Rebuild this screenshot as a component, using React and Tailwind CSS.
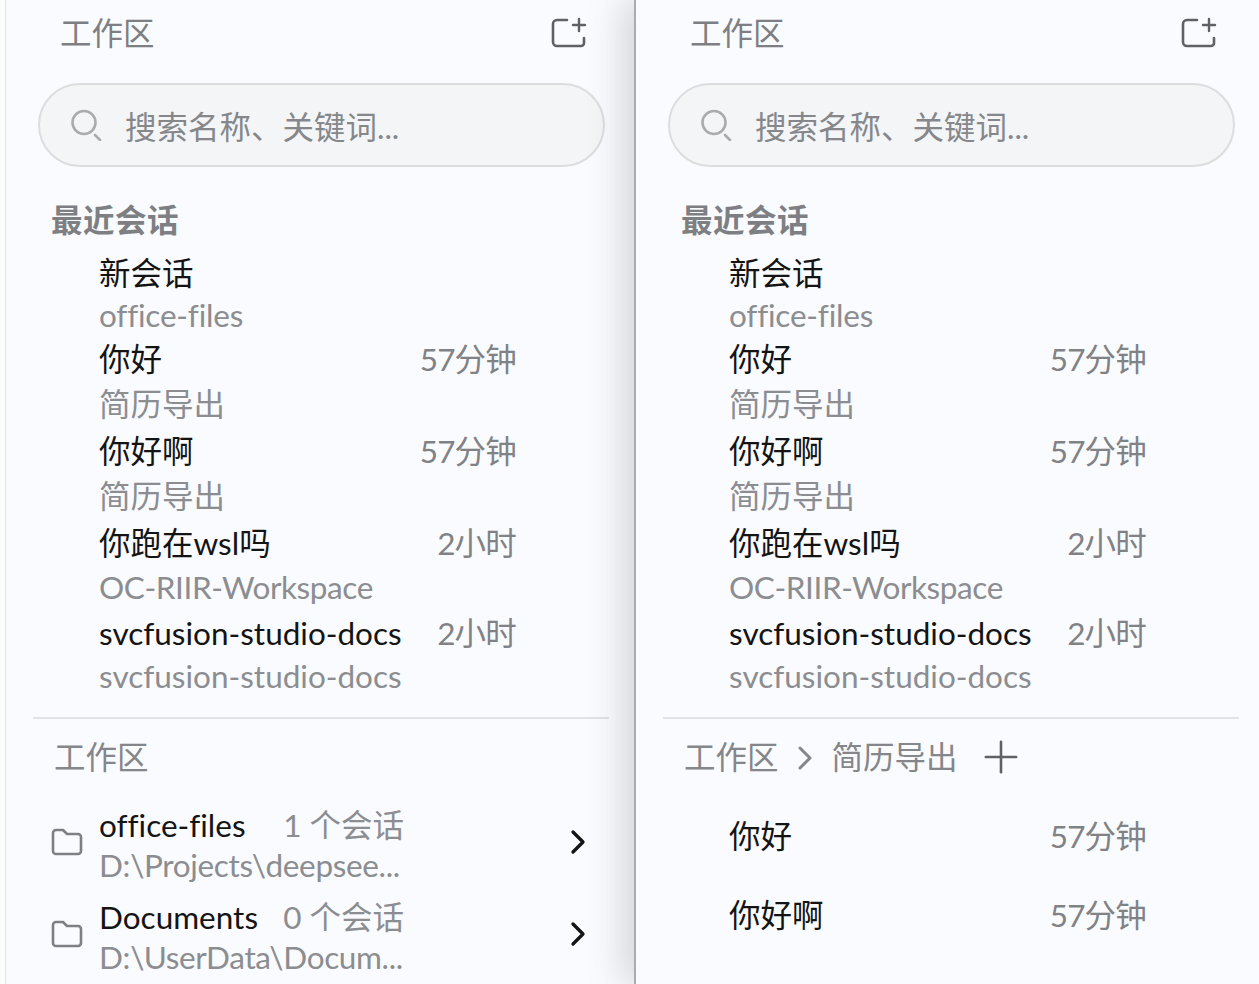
import { ChevronRight, Plus } from "lucide-react";

const sessions = [
  { title: "新会话", sub: "office-files", time: "", subClass: "leading-[40px] mb-[2px] tracking-[-0.2px]" },
  { title: "你好", sub: "简历导出", time: "57分钟", subClass: "leading-[46px] mb-[2px]" },
  { title: "你好啊", sub: "简历导出", time: "57分钟", subClass: "leading-[47px] mb-[1px]" },
  { title: "你跑在wsl吗", sub: "OC-RIIR-Workspace", time: "2小时", subClass: "leading-[44px] mb-[2px] tracking-[-0.4px]" },
  { title: "svcfusion-studio-docs", sub: "svcfusion-studio-docs", time: "2小时", subClass: "leading-[42px] mb-[2px]" },
];

const workspaces = [
  { name: "office-files", count: "1 个会话", path: "D:\\Projects\\deepsee..." },
  { name: "Documents", count: "0 个会话", path: "D:\\UserData\\Docum..." },
];

function NewChatIcon() {
  return (
    <svg width="36" height="32" viewBox="0 0 36 32" fill="none" stroke="#5f6164" strokeWidth="2.6" strokeLinecap="round" strokeLinejoin="round">
      <path d="M16 3H6a4 4 0 0 0-4 4v18a4 4 0 0 0 4 4h24a3 3 0 0 0 3-3v-5" />
      <path d="M28 2v12M22 8h12" strokeWidth="2.4" />
    </svg>
  );
}

function SearchIcon() {
  return (
    <svg width="32" height="32" viewBox="0 0 32 32" fill="none" stroke="#a9abae" strokeWidth="2.6" strokeLinecap="round">
      <circle cx="14" cy="13.5" r="11.5" />
      <path d="M25 26l5 5" />
    </svg>
  );
}

function FolderIcon() {
  return (
    <svg width="32" height="28" viewBox="0 0 32 28" fill="none" stroke="#7d7f83" strokeWidth="2.6" strokeLinejoin="round">
      <path d="M2 5a3 3 0 0 1 3-3h7l4 4h11a3 3 0 0 1 3 3v14a3 3 0 0 1-3 3H5a3 3 0 0 1-3-3z" />
    </svg>
  );
}

function SessionRow({ title, sub, time, subClass }) {
  return (
    <div className="w-[417px] ml-[66px]">
      <div className="flex justify-between leading-[44px] text-[#141414]">
        <span className="whitespace-nowrap">{title}</span>
        <span className="text-[#808285] tracking-[-0.8px]">{time}</span>
      </div>
      <div className={`text-[#8b8d91] whitespace-nowrap ${subClass}`}>{sub}</div>
    </div>
  );
}

function Panel({ children, className }) {
  return (
    <div className={`h-[984px] overflow-hidden bg-[#fafbfe] shrink-0 ${className}`}>
      <div className="w-[576px] ml-[27px]">
        <div className="h-[66px] flex items-center justify-between pl-[27px] pr-[22px]">
          <span className="text-[#7d7f83] pt-[2px]">工作区</span>
          <NewChatIcon />
        </div>
        <div className="mt-[17px] ml-[5px] w-[567px] h-[84px] rounded-full border-2 border-[#dcdddf] bg-[#f4f5f7] flex items-center pl-[30px]">
          <SearchIcon />
          <span className="ml-[23px] pt-[5px] text-[#85878b]">搜索名称、关键词...</span>
        </div>
        <div className="mt-[31px] h-[45px] pl-[18px] leading-[45px] font-bold tracking-[0.5px] text-[#7d7f83]">最近会话</div>
        <div className="mt-[8px]">
          {sessions.map((s) => (
            <SessionRow key={s.title} {...s} />
          ))}
        </div>
        <div className="mt-[20px] h-[2px] bg-[#e2e3e5]" />
        {children}
      </div>
    </div>
  );
}

export default function App() {
  return (
    <div className="flex w-[1259px] h-[984px] overflow-hidden bg-[#fdfdfd] text-[31.5px] [font-variant-ligatures:none] font-['Lato','Noto_Sans_CJK_SC',sans-serif]">
      <div className="w-[6px] shrink-0 border-r border-[#e3e4e6]" />
      <Panel className="w-[628px]">
        <div className="h-[78px] flex items-center pl-[21px] text-[#84868a]">工作区</div>
        <div className="mt-[8px] flex flex-col gap-[12px]">
          {workspaces.map((w) => (
            <div key={w.name} className="flex items-center">
              <div className="w-[66px] pl-[18px] -mt-[6px]">
                <FolderIcon />
              </div>
              <div className="w-[305px]">
                <div className="flex justify-between leading-[40px] text-[#141414]">
                  <span>{w.name}</span>
                  <span className="text-[#8b8d91]">{w.count}</span>
                </div>
                <div className="leading-[40px] text-[#8b8d91] whitespace-nowrap tracking-[-0.35px]">{w.path}</div>
              </div>
              <ChevronRight className="ml-[154px] -mt-[6px] text-[#141414]" size={40} strokeWidth={2} />
            </div>
          ))}
        </div>
      </Panel>
      <Panel className="w-[625px] relative z-10 border-l-2 border-[#a9abad] shadow-[-10px_0_34px_rgba(70,74,80,0.22)]">
        <div className="h-[78px] flex items-center pl-[21px] text-[#84868a]">
          <span>工作区</span>
          <ChevronRight className="ml-[6px] text-[#84868a]" size={40} strokeWidth={1.8} />
          <span className="ml-[7px]">简历导出</span>
          <Plus className="ml-[17px] -mt-[2px] text-[#5f6164]" size={52} strokeWidth={1.2} />
        </div>
        <div>
          <div className="w-[417px] ml-[66px] h-[79px] flex items-center justify-between text-[#141414]">
            <span>你好</span>
            <span className="text-[#808285] tracking-[-0.8px]">57分钟</span>
          </div>
          <div className="w-[417px] ml-[66px] h-[79px] flex items-center justify-between text-[#141414]">
            <span>你好啊</span>
            <span className="text-[#808285] tracking-[-0.8px]">57分钟</span>
          </div>
        </div>
      </Panel>
    </div>
  );
}
